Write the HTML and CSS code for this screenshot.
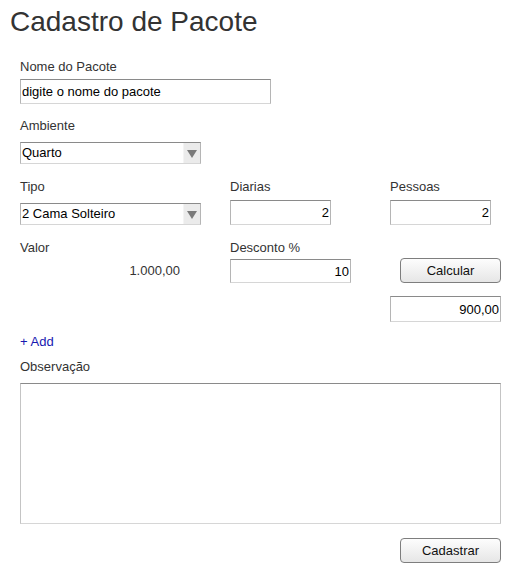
FILE: index.html
```html
<!DOCTYPE html>
<html lang="pt">
<head>
<meta charset="utf-8">
<title>Cadastro de Pacote</title>
<link rel="stylesheet" href="styles.css">
</head>
<body>
<div class="page">
  <h1 class="title">Cadastro de Pacote</h1>
  <div class="form">
    <div class="field row-nome">
      <label class="lbl">Nome do Pacote</label>
      <input class="inp w-nome" type="text" value="digite o nome do pacote">
    </div>

    <div class="field row-amb">
      <label class="lbl">Ambiente</label>
      <div class="sel">
        <span class="sel-text">Quarto</span>
        <span class="sel-arrow"><svg width="10" height="8" viewBox="0 0 10 8"><path d="M0 0H10L5 8Z" fill="#7a7a7a"/></svg></span>
      </div>
    </div>

    <div class="grid row-tipo">
      <div class="field">
        <label class="lbl">Tipo</label>
        <div class="sel sel-tipo">
          <span class="sel-text">2 Cama Solteiro</span>
          <span class="sel-arrow"><svg width="10" height="8" viewBox="0 0 10 8"><path d="M0 0H10L5 8Z" fill="#7a7a7a"/></svg></span>
        </div>
      </div>
      <div class="field">
        <label class="lbl">Diarias</label>
        <input class="inp num w-small ctl-top" type="text" value="2">
      </div>
      <div class="field">
        <label class="lbl">Pessoas</label>
        <input class="inp num w-small ctl-top" type="text" value="2">
      </div>
    </div>

    <div class="grid row-valor">
      <div class="field">
        <label class="lbl">Valor</label>
        <div class="valor">1.000,00</div>
      </div>
      <div class="field">
        <label class="lbl">Desconto %</label>
        <input class="inp num w-desc" type="text" value="10">
      </div>
      <div class="cell-btn">
        <button class="btn" type="button">Calcular</button>
      </div>
    </div>

    <div class="grid row-total">
      <input class="inp num w-total" type="text" value="900,00">
    </div>

    <a class="add" href="#">+ Add</a>

    <div class="field row-obs">
      <label class="lbl">Observação</label>
      <textarea class="area"></textarea>
    </div>

    <div class="actions">
      <button class="btn" type="button">Cadastrar</button>
    </div>
  </div>
</div>
</body>
</html>
```

FILE: styles.css
```css
* { box-sizing: border-box; }

html, body {
  margin: 0;
  padding: 0;
  background: #ffffff;
}

body {
  font-family: "Liberation Sans", Arial, sans-serif;
  font-size: 13px;
  color: #333333;
}

.page {
  padding: 0 0 0 10px;
}

.title {
  margin: 0;
  padding-top: 6px;
  font-size: 28px;
  font-weight: normal;
  line-height: 32px;
  color: #333333;
}

.form {
  margin-left: 10px;
  width: 481px;
}

.field {
  display: flex;
  flex-direction: column;
  align-items: flex-start;
}

.lbl {
  display: block;
  padding-top: 1px;
  line-height: 16px;
  height: 17px;
  font-size: 13px;
  color: #333333;
}

.inp {
  display: block;
  height: 25px;
  margin: 4px 0 0 0;
  padding: 0 1px;
  font-family: "Liberation Sans", Arial, sans-serif;
  font-size: 13px;
  color: #000000;
  background: #ffffff;
  border: 1px solid;
  border-color: #8a8a8a #b5b5b5 #d6d6d6 #b5b5b5;
  border-radius: 0;
  outline: none;
}

.num { text-align: right; }

.w-nome { width: 251px; }
.w-small { width: 101px; }
.ctl-top { margin-top: 5px; }
.w-desc { width: 121px; height: 24px; margin-top: 3px; }
.w-total { width: 111px; height: 26px; margin-top: 0; grid-column: 3; justify-self: end; }

.sel {
  position: relative;
  width: 181px;
  height: 22px;
  margin-top: 8px;
  border: 1px solid;
  border-color: #8a8a8a #b5b5b5 #d6d6d6 #b5b5b5;
  background: #ffffff;
  display: flex;
  align-items: center;
  padding-left: 1px;
  color: #000000;
}

.sel-text {
  line-height: 16px;
}

.sel-arrow {
  position: absolute;
  top: 0;
  right: 0;
  bottom: 0;
  width: 17px;
  background: #ebebeb;
  border-left: 1px solid #f4f4f4;
  display: flex;
  align-items: center;
  justify-content: center;
}

.sel-arrow svg { display: block; margin-top: 1px; }

.row-nome { margin-top: 20px; }
.row-amb { margin-top: 13px; }

.grid {
  display: grid;
  grid-template-columns: 210px 160px 111px;
}

.row-tipo { margin-top: 14px; }
.row-valor { margin-top: 14px; }

.valor {
  width: 160px;
  margin-top: 7px;
  line-height: 16px;
  text-align: right;
  color: #333333;
}

.cell-btn {
  display: flex;
  justify-content: flex-end;
  align-items: flex-start;
  padding-top: 19px;
}

.btn {
  width: 101px;
  height: 25px;
  padding: 0;
  font-family: "Liberation Sans", Arial, sans-serif;
  font-size: 13px;
  color: #111111;
  border: 1px solid #7e7e7e;
  border-radius: 4px;
  background: linear-gradient(#fdfdfd, #e6e6e6);
}

.row-total { margin-top: 13px; }

.add {
  display: block;
  margin-top: 12px;
  line-height: 16px;
  color: #1818b0;
  text-decoration: none;
  width: max-content;
}

.row-obs { margin-top: 8px; }

.area {
  display: block;
  width: 481px;
  height: 141px;
  margin-top: 8px;
  resize: none;
  border: 1px solid;
  border-color: #8a8a8a #c4c4c4 #d6d6d6 #c4c4c4;
  outline: none;
  background: #ffffff;
}

.actions {
  display: flex;
  justify-content: flex-end;
  margin-top: 14px;
}
```
